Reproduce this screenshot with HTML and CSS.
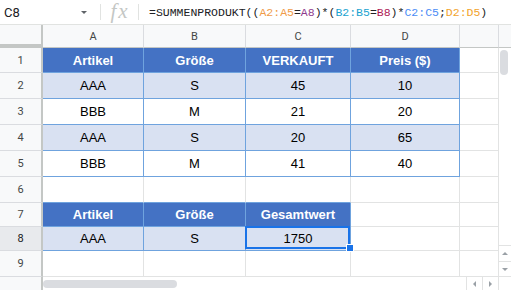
FILE: index.html
```html
<!DOCTYPE html>
<html lang="de">
<head>
<meta charset="utf-8">
<title>SUMMENPRODUKT</title>
<link rel="stylesheet" href="styles.css">
</head>
<body>
<div class="app">
  <div class="fbar">
    <div class="namebox"><span class="name">C8</span><span class="caret"></span></div>
    <div class="fx">fx</div>
    <div class="formula">=SUMMENPRODUKT((<span class="c1">A2:A5</span>=<span class="c2">A8</span>)*(<span class="c3">B2:B5</span>=<span class="c4">B8</span>)*<span class="c5">C2:C5</span>;<span class="c6">D2:D5</span>)</div>
  </div>
  <div class="sheet">
    <div class="corner"></div>
    <div class="ch">A</div><div class="ch">B</div><div class="ch">C</div><div class="ch">D</div><div class="ch"></div>
    <div class="vscroll">
      <div class="vs-head"></div>
      <div class="vs-thumb"></div>
      <div class="vs-space"></div>
      <div class="vs-btn"><span class="tri up"></span></div>
      <div class="vs-btn last"><span class="tri down"></span></div>
    </div>

    <div class="rh">1</div>
    <div class="c t hd">Artikel</div><div class="c t hd">Größe</div><div class="c t hd">VERKAUFT</div><div class="c t hd">Preis ($)</div><div class="c"></div>

    <div class="rh">2</div>
    <div class="c t lt">AAA</div><div class="c t lt">S</div><div class="c t lt">45</div><div class="c t lt">10</div><div class="c"></div>

    <div class="rh">3</div>
    <div class="c t">BBB</div><div class="c t">M</div><div class="c t">21</div><div class="c t">20</div><div class="c"></div>

    <div class="rh">4</div>
    <div class="c t lt">AAA</div><div class="c t lt">S</div><div class="c t lt">20</div><div class="c t lt">65</div><div class="c"></div>

    <div class="rh">5</div>
    <div class="c t">BBB</div><div class="c t">M</div><div class="c t">41</div><div class="c t">40</div><div class="c"></div>

    <div class="rh">6</div>
    <div class="c bb"></div><div class="c bb"></div><div class="c bb"></div><div class="c"></div><div class="c"></div>

    <div class="rh">7</div>
    <div class="c t hd">Artikel</div><div class="c t hd">Größe</div><div class="c t hd">Gesamtwert</div><div class="c"></div><div class="c"></div>

    <div class="rh sel">8</div>
    <div class="c t lt">AAA</div><div class="c t lt">S</div><div class="c t lt active">1750</div><div class="c"></div><div class="c"></div>

    <div class="rh">9</div>
    <div class="c"></div><div class="c"></div><div class="c"></div><div class="c"></div><div class="c"></div>

    <div class="hscroll">
      <div class="hs-left"></div>
      <div class="hs-track"><div class="hs-thumb"></div></div>
      <div class="hs-btn"><span class="tri left"></span></div>
      <div class="hs-btn"><span class="tri right"></span></div>
      <div class="hs-corner"></div>
    </div>
  </div>
</div>
</body>
</html>
```

FILE: styles.css
```css
* { box-sizing: border-box; }
html, body { margin: 0; padding: 0; background: #fff; }
.app {
  width: 511px;
  height: 290px;
  overflow: hidden;
  display: flex;
  flex-direction: column;
  font-family: "Liberation Sans", Arial, sans-serif;
}

/* formula bar */
.fbar {
  height: 25px;
  flex: 0 0 25px;
  display: flex;
  align-items: center;
  border-bottom: 1px solid #e1e3e1;
}
.namebox {
  width: 101px;
  height: 100%;
  display: flex;
  align-items: center;
  padding-left: 4px;
  position: relative;
}
.namebox::after {
  content: "";
  width: 1px;
  height: 16px;
  background: #e1e3e1;
  margin-left: auto;
}
.name {
  font-family: Roboto, "Liberation Sans", sans-serif;
  font-size: 13px;
  color: #202124;
}
.caret {
  width: 0; height: 0;
  border-left: 3.5px solid transparent;
  border-right: 3.5px solid transparent;
  border-top: 3.5px solid #5f6368;
  margin-left: 61px;
  margin-right: 7px;
}
.fx {
  width: 38px;
  height: 100%;
  display: flex;
  align-items: center;
  justify-content: center;
  font-family: "Liberation Serif", serif;
  font-style: italic;
  font-size: 21px;
  letter-spacing: 2px;
  color: #c4c7c5;
  padding-bottom: 2px;
  position: relative;
}
.fx::after {
  content: "";
  position: absolute;
  right: 0;
  top: 4px;
  width: 1px;
  height: 16px;
  background: #e1e3e1;
}
.formula {
  padding-left: 10px;
  font-family: "Liberation Mono", "DejaVu Sans Mono", monospace;
  font-size: 11.5px;
  color: #202124;
  white-space: nowrap;
}
.c1 { color: #f09b48; }
.c2 { color: #8e3a8c; }
.c3 { color: #1aa3d0; }
.c4 { color: #ad1a55; }
.c5 { color: #4c8df6; }
.c6 { color: #f2a32c; }

/* sheet grid */
.sheet {
  flex: 1;
  display: grid;
  grid-template-columns: 43px 101px 102px 105px 109px 39px 12px;
  grid-template-rows: 23px 25px 26px 26px 26px 26px 26px 24px 24px 26px 13px;
}
.corner {
  background: #f8f9fa;
  border-right: 2px solid #c4c7c5;
  border-bottom: 4px solid #c4c7c5;
}
.ch {
  background: #f8f9fa;
  border-right: 1px solid #dadce0;
  border-bottom: 1px solid #c4c7c5;
  display: flex;
  align-items: center;
  justify-content: center;
  font-family: Roboto, "Liberation Sans", sans-serif;
  font-size: 11px;
  color: #444746;
}
.rh {
  background: #f8f9fa;
  border-right: 2px solid #c4c7c5;
  border-bottom: 1px solid #dadce0;
  display: flex;
  align-items: center;
  justify-content: center;
  font-family: Roboto, "Liberation Sans", sans-serif;
  font-size: 11px;
  color: #444746;
}
.rh.sel { background: #e8eaed; color: #202124; }
.c {
  border-right: 1px solid #e2e3e3;
  border-bottom: 1px solid #e2e3e3;
  display: flex;
  align-items: center;
  justify-content: center;
  font-size: 13px;
  color: #000;
}
.c.t { border-right-color: #6fa3de; border-bottom-color: #6fa3de; }
.c.bb { border-bottom-color: #6fa3de; }
.c.hd { background: #4472c4; color: #fff; font-weight: bold; }
.c.lt { background: #d9e1f2; }
.c.active { position: relative; }
.c.active::before {
  content: "";
  position: absolute;
  left: -1px; top: -1px; right: 0; bottom: 1px;
  border: 2px solid #1a73e8;
}
.c.active::after {
  content: "";
  position: absolute;
  right: -3px; bottom: -1px;
  width: 6px; height: 6px;
  background: #1a73e8;
  outline: 1px solid #fff;
}

/* vertical scrollbar */
.vscroll {
  grid-column: 7;
  grid-row: 1 / 11;
  display: flex;
  flex-direction: column;
  background: #fff;
  border-bottom: 1px solid #e2e3e3;
}
.vs-head { height: 23px; flex: 0 0 23px; background: #f8f9fa; border-bottom: 1px solid #c4c7c5; }
.vs-thumb { margin: 2px 0 0 1px; width: 8px; height: 25px; border-radius: 4px; background: #dadce0; }
.vs-space { flex: 1; }
.vs-btn {
  height: 16px;
  flex: 0 0 16px;
  border-top: 1px solid #e2e3e3;
  display: flex;
  align-items: center;
  justify-content: center;
}
.vs-btn.last { height: 15px; flex-basis: 15px; }

/* horizontal scrollbar */
.hscroll {
  grid-column: 1 / 8;
  grid-row: 11;
  display: flex;
}
.hs-left { width: 43px; background: #f8f9fa; border-right: 2px solid #c4c7c5; }
.hs-track { flex: 1; padding: 3px 0 0 0; }
.hs-thumb { width: 134px; height: 8px; border-radius: 4px; background: #dadce0; }
.hs-btn {
  width: 16px;
  border-left: 1px solid #e2e3e3;
  display: flex;
  align-items: center;
  justify-content: center;
}
.hs-corner { width: 13px; border-left: 1px solid #e2e3e3; }

.tri { width: 0; height: 0; display: block; }
.tri.up { border-left: 3.5px solid transparent; border-right: 3.5px solid transparent; border-bottom: 3.5px solid #9aa0a6; }
.tri.down { border-left: 3.5px solid transparent; border-right: 3.5px solid transparent; border-top: 3.5px solid #9aa0a6; }
.tri.left { border-top: 3.5px solid transparent; border-bottom: 3.5px solid transparent; border-right: 3.5px solid #9aa0a6; }
.tri.right { border-top: 3.5px solid transparent; border-bottom: 3.5px solid transparent; border-left: 3.5px solid #9aa0a6; }
```
